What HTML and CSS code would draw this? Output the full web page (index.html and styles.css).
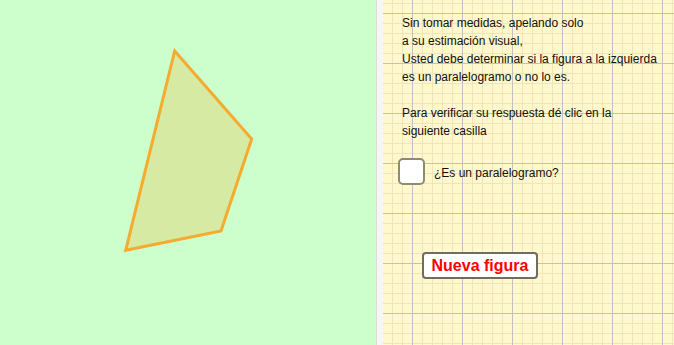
FILE: index.html
```html
<!DOCTYPE html>
<html lang="es">
<head>
  <meta charset="UTF-8" />
  <title>Paralelogramo</title>
  <link rel="stylesheet" href="styles.css">
</head>
<body>

<div class="app">
  <div class="vista-grafica">
    <svg class="figura" width="376" height="345" viewBox="0 0 376 345">
      <polygon points="174.7,51 251.7,139 221,231 125.7,250.3" />
    </svg>
  </div>

  <div class="separador"></div>

  <div class="vista-texto">
    <p>Sin tomar medidas, apelando solo<br>
      a su estimación visual,<br>
      Usted debe determinar si la figura a la izquierda<br>
      es un paralelogramo o no lo es.</p>
    <p>Para verificar su respuesta dé clic en la<br>
      siguiente casilla</p>

    <label class="casilla">
      <span class="caja"></span>
      <span>¿Es un paralelogramo?</span>
    </label>

    <button class="btn-nueva">Nueva figura</button>
  </div>
</div>

</body>
</html>
```

FILE: styles.css
```css
* {
  box-sizing: border-box;
}
body {
  margin: 0;
  font-family: "Liberation Sans", Arial, sans-serif;
  color: #111;
  overflow: hidden;
}
.app {
  display: flex;
  width: 674px;
  height: 345px;
}
.vista-grafica {
  width: 376px;
  flex-shrink: 0;
  background: #ccffcc;
}
.figura {
  display: block;
}
.figura polygon {
  fill: #d6eaa4;
  stroke: #f5ab30;
  stroke-width: 3;
  stroke-linejoin: miter;
}
.separador {
  width: 7px;
  flex-shrink: 0;
  background: #f6f6f6;
  border-left: 1px solid #dcdcdc;
}
.vista-texto {
  flex: 1;
  padding: 14px 0 0 19px;
  font-size: 12px;
  line-height: 18px;
  background:
    linear-gradient(to right, #c2c0c0 1px, transparent 1px) 29px 0 / 50px 50px,
    linear-gradient(to bottom, #c2c0c0 1px, transparent 1px) 0 13px / 50px 50px,
    linear-gradient(to right, #f0e4b8 1px, transparent 1px) 9px 0 / 10px 10px,
    linear-gradient(to bottom, #f0e4b8 1px, transparent 1px) 0 3px / 10px 10px,
    #fff8cc;
}
.vista-texto p {
  margin: 0 0 18px;
}
.casilla {
  display: flex;
  align-items: center;
  gap: 9px;
  margin: 1px 0 0 -4px;
}
.casilla span:last-child {
  padding-top: 2px;
}
.caja {
  width: 27px;
  height: 27px;
  background: #fff;
  border: 2px solid #8d8b72;
  border-radius: 5px;
}
.btn-nueva {
  display: block;
  margin: 67px 0 0 20px;
  width: 116px;
  height: 27px;
  padding: 0;
  background: #fff;
  border: 2px solid #6f6c62;
  border-radius: 4px;
  color: #ff0000;
  font-family: "Liberation Sans", Arial, sans-serif;
  font-weight: bold;
  font-size: 16px;
  line-height: 23px;
}
```
